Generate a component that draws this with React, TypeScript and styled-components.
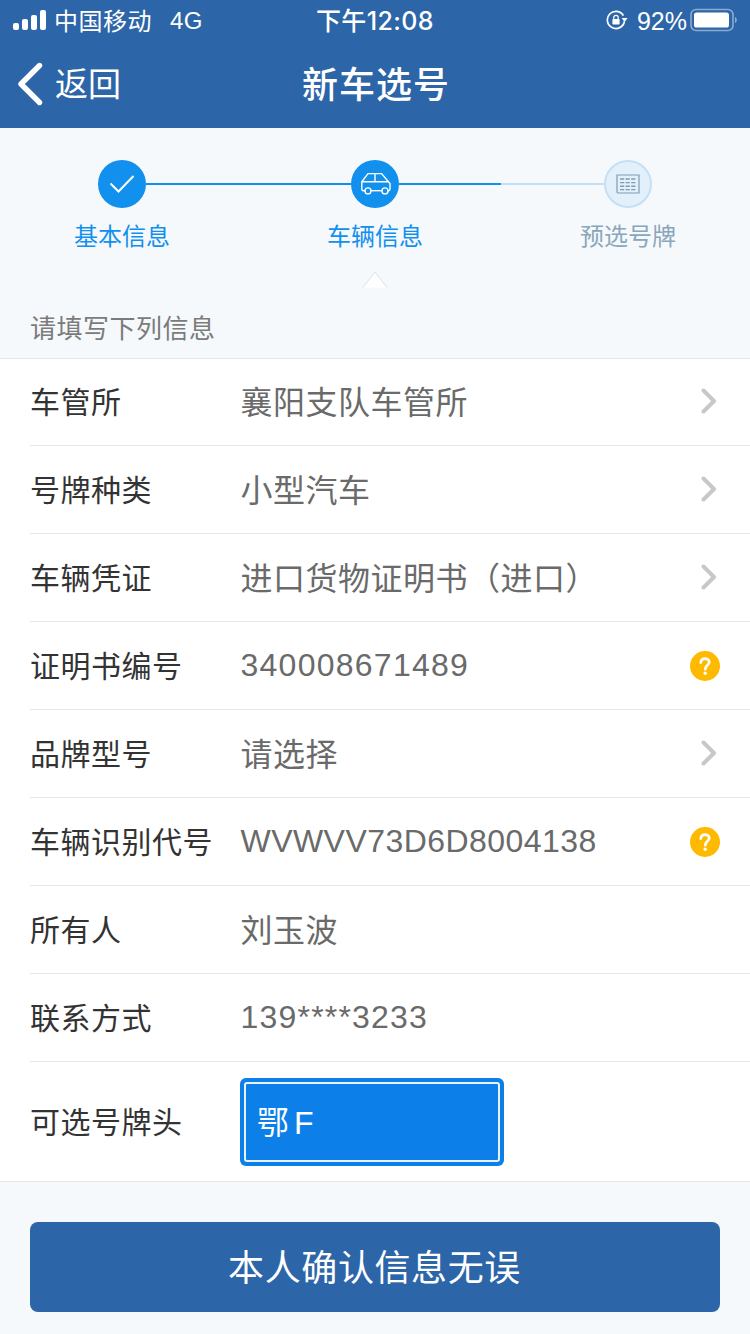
import React from 'react';
import styled, { createGlobalStyle } from 'styled-components';

const GlobalStyle = createGlobalStyle`
  html, body {
    margin: 0;
    padding: 0;
    background: #f5f9fb;
  }
  * {
    box-sizing: border-box;
  }
`;

type RowData = {
  label: string;
  value: string;
  trailing?: 'chevron' | 'help';
  latinSpacing?: number;
};

const rows: RowData[] = [
  { label: '车管所', value: '襄阳支队车管所', trailing: 'chevron' },
  { label: '号牌种类', value: '小型汽车', trailing: 'chevron' },
  { label: '车辆凭证', value: '进口货物证明书（进口）', trailing: 'chevron' },
  { label: '证明书编号', value: '340008671489', trailing: 'help', latinSpacing: 1.25 },
  { label: '品牌型号', value: '请选择', trailing: 'chevron' },
  { label: '车辆识别代号', value: 'WVWVV73D6D8004138', trailing: 'help', latinSpacing: 0.45 },
  { label: '所有人', value: '刘玉波' },
  { label: '联系方式', value: '139****3233', latinSpacing: 1.2 },
];

const Chevron = () => (
  <ChevronSvg width="16" height="26" viewBox="0 0 16 26" fill="none">
    <path d="M2.5 2.5 L13 13 L2.5 23.5" stroke="#c8c8c8" strokeWidth="4" strokeLinecap="round" strokeLinejoin="round" />
  </ChevronSvg>
);

const HelpIcon = () => (
  <svg width="30" height="30" viewBox="0 0 30 30">
    <circle cx="15" cy="15" r="15" fill="#ffb900" />
    <path d="M10.8 11.6 C10.8 9 12.8 7.6 15 7.6 C17.4 7.6 19.2 9.1 19.2 11.3 C19.2 14.2 15.3 14.6 15.3 18.2" fill="none" stroke="#fff" strokeWidth="2.7" strokeLinecap="round" />
    <circle cx="15.2" cy="22.2" r="1.7" fill="#fff" />
  </svg>
);

const App = () => {
  return (
    <Page>
      <GlobalStyle />
      <Header>
        <StatusBar>
          <StatusLeft>
            <svg width="34" height="22" viewBox="0 0 34 22">
              <rect x="0" y="14" width="6" height="7" rx="2" fill="#fff" />
              <rect x="9" y="10" width="6" height="11" rx="2" fill="#fff" />
              <rect x="18" y="6" width="6" height="15" rx="2" fill="#fff" />
              <rect x="27" y="1" width="6" height="20" rx="2" fill="#fff" />
            </svg>
            <Carrier>中国移动</Carrier>
            <Network>4G</Network>
          </StatusLeft>
          <StatusTime>下午12:08</StatusTime>
          <StatusRight>
            <svg width="22" height="20" viewBox="0 0 22 20" fill="none">
              <path d="M17.4 5.6 A8.6 8.6 0 1 0 18.4 11.5" stroke="#fff" strokeWidth="1.7" />
              <path d="M15.6 8 L21.6 8 L18.6 12 Z" fill="#fff" />
              <rect x="6.4" y="9" width="7.2" height="5.6" rx="0.8" fill="#fff" />
              <path d="M7.8 9 V7.6 A2.2 2.2 0 0 1 12.2 7.6 V9" stroke="#fff" strokeWidth="1.2" />
            </svg>
            <Battery>92%</Battery>
            <svg width="47" height="24" viewBox="0 0 47 24" fill="none">
              <rect x="1" y="1.5" width="42" height="21" rx="5" stroke="#fff" strokeOpacity="0.45" strokeWidth="1.6" />
              <rect x="4" y="4.5" width="35" height="15" rx="2.6" fill="#fff" />
              <path d="M45 9 C46.2 9.5 46.8 10.6 46.8 12 C46.8 13.4 46.2 14.5 45 15 Z" fill="#fff" fillOpacity="0.45" />
            </svg>
          </StatusRight>
        </StatusBar>
        <NavBar>
          <BackButton>
            <svg width="26" height="44" viewBox="0 0 26 44" fill="none">
              <path d="M22.5 3.5 L4 22 L22.5 40.5" stroke="#fff" strokeWidth="5.4" strokeLinecap="round" strokeLinejoin="round" />
            </svg>
            <BackLabel>返回</BackLabel>
          </BackButton>
          <NavTitle>新车选号</NavTitle>
        </NavBar>
      </Header>

      <Stepper>
        <StepTrack>
          <StepCircle>
            <svg width="26" height="20" viewBox="0 0 26 20" fill="none">
              <path d="M1.5 9.5 L9.5 17.5 L24.5 2" stroke="#fff" strokeWidth="2" />
            </svg>
          </StepCircle>
          <StepLine $done={100} />
          <StepCircle>
            <svg width="32" height="24" viewBox="0 0 32 24" fill="none" stroke="#fff" strokeWidth="1.4">
              <path d="M6 18.7 H4.2 C3.3 18.7 2.8 18.2 2.8 17.3 V9.8 L9 1.6 H22.6 L29 9.2 L31 11.6 V17 C31 18.1 30.5 18.7 29.6 18.7 H29" />
              <path d="M12 18.7 H23" />
              <circle cx="9" cy="18.9" r="3" />
              <circle cx="26" cy="18.9" r="3" />
              <path d="M2.8 9.8 H29 M16 1.6 V9.8" />
            </svg>
          </StepCircle>
          <StepLine $done={50} />
          <StepCircle $pending>
            <svg width="24" height="20" viewBox="0 0 24 20" fill="none" stroke="#7f9cb3">
              <path d="M23 19 H2.6 C1.6 19 1 18.4 1 17.4 V1 H23 Z" strokeWidth="1.2" />
              <path d="M4 5 H20.5 M4 8.6 H20.5 M4 12.2 H20.5 M4 15.6 H20.5" strokeWidth="1.4" strokeDasharray="4.2 1.4" />
            </svg>
          </StepCircle>
        </StepTrack>
        <StepLabels>
          <StepLabel>基本信息</StepLabel>
          <StepLabel>车辆信息</StepLabel>
          <StepLabel $pending>预选号牌</StepLabel>
        </StepLabels>
        <Pointer>
          <svg width="26" height="17" viewBox="0 0 26 17">
            <path d="M1 16.5 L13 1 L25 16.5 Z" fill="#fff" />
            <path d="M1 16.5 L13 1 L25 16.5" fill="none" stroke="#d6e3ee" strokeWidth="1" />
          </svg>
        </Pointer>
        <SectionTitle>请填写下列信息</SectionTitle>
      </Stepper>

      <FormList>
        {rows.map((row) => (
          <Row key={row.label}>
            <RowLabel>{row.label}</RowLabel>
            <RowValue $latinSpacing={row.latinSpacing}>{row.value}</RowValue>
            <RowTrailing>
              {row.trailing === 'chevron' && <Chevron />}
              {row.trailing === 'help' && <HelpIcon />}
            </RowTrailing>
          </Row>
        ))}
        <PlateRow>
          <RowLabel>可选号牌头</RowLabel>
          <PlateSelect>
            <PlateInner>鄂F</PlateInner>
          </PlateSelect>
        </PlateRow>
      </FormList>

      <Footer>
        <ConfirmButton>本人确认信息无误</ConfirmButton>
      </Footer>
    </Page>
  );
};

const FONT = `"Liberation Sans", "Noto Sans CJK SC", sans-serif`;

const Page = styled.div`
  width: 750px;
  height: 1334px;
  overflow: hidden;
  display: flex;
  flex-direction: column;
  background: #f5f9fb;
  font-family: ${FONT};
`;

const Header = styled.header`
  height: 128px;
  background: #2c65a8;
  color: #fff;
`;

const StatusBar = styled.div`
  height: 40px;
  padding: 0 13px;
  display: grid;
  grid-template-columns: 1fr auto 1fr;
  align-items: center;
`;

const StatusLeft = styled.div`
  display: flex;
  align-items: center;
  gap: 7px;
`;

const Carrier = styled.span`
  font-size: 24px;
  letter-spacing: 0.5px;
  padding-bottom: 2px;
`;

const Network = styled.span`
  font-size: 24px;
  margin-left: 11px;
  padding-top: 2px;
  letter-spacing: 0.4px;
`;

const StatusTime = styled.span`
  font-family: Inter, "Noto Sans CJK SC", sans-serif;
  font-size: 25px;
  font-weight: 500;
  letter-spacing: 0.4px;
  padding-bottom: 2px;
`;

const StatusRight = styled.div`
  display: flex;
  align-items: center;
  justify-content: flex-end;
  gap: 3px;
`;

const Battery = styled.span`
  font-size: 25px;
  margin-left: 6px;
  padding-top: 2px;
`;

const NavBar = styled.nav`
  height: 88px;
  position: relative;
  display: flex;
  align-items: center;
  justify-content: center;
`;

const BackButton = styled.div`
  position: absolute;
  left: 17px;
  top: 0;
  height: 88px;
  display: flex;
  align-items: center;
  gap: 12px;
`;

const BackLabel = styled.span`
  font-size: 33px;
  padding-bottom: 4px;
`;

const NavTitle = styled.h1`
  margin: 0;
  padding: 0 0 4px 2px;
  font-size: 36px;
  font-weight: 500;
  letter-spacing: 1px;
`;

const Stepper = styled.section`
  height: 230px;
  padding-top: 32px;
  display: flex;
  flex-direction: column;
`;

const StepTrack = styled.div`
  display: flex;
  align-items: center;
  padding: 0 98px;
`;

const StepCircle = styled.div<{ $pending?: boolean }>`
  width: 48px;
  height: 48px;
  flex: none;
  border-radius: 50%;
  display: flex;
  align-items: center;
  justify-content: center;
  background: ${({ $pending }) => ($pending ? '#e2f0fb' : '#1190ee')};
  border: ${({ $pending }) => ($pending ? '2px solid #c5e0f4' : 'none')};
`;

const StepLine = styled.div<{ $done: number }>`
  flex: 1;
  height: 2px;
  background: ${({ $done }) => `linear-gradient(to right, #1190ee ${$done}%, #c5e0f4 ${$done}%)`};
`;

const StepLabels = styled.div`
  display: flex;
  justify-content: space-between;
  padding: 0 74px;
  margin-top: 12px;
`;

const StepLabel = styled.span<{ $pending?: boolean }>`
  font-size: 24px;
  line-height: 34px;
  color: ${({ $pending }) => ($pending ? '#8aa6bc' : '#1190ee')};
`;

const Pointer = styled.div`
  display: flex;
  justify-content: center;
  margin-top: 17px;
  height: 16px;

  svg {
    display: block;
  }
`;

const SectionTitle = styled.div`
  padding-left: 30px;
  margin-top: 25px;
  font-size: 26px;
  line-height: 34px;
  letter-spacing: 0.5px;
  color: #7b7b7b;
`;

const FormList = styled.div`
  background: #fff;
  border-top: 1px solid #e6e6e6;
  border-bottom: 1px solid #e6e6e6;
`;

const Row = styled.div`
  height: 88px;
  margin-left: 30px;
  padding-right: 30px;
  display: flex;
  align-items: center;
  border-bottom: 1px solid #e6e6e6;

  &:first-child {
    height: 87px;
  }
`;

const RowLabel = styled.span`
  width: 210px;
  flex: none;
  padding-bottom: 4px;
  font-size: 30px;
  letter-spacing: 0.5px;
  color: #333;
`;

// CJK glyphs sit lower in the line box than latin ones, so only those get lifted
const RowValue = styled.span<{ $latinSpacing?: number }>`
  flex: 1;
  padding-left: 0.5px;
  padding-bottom: ${({ $latinSpacing }) => ($latinSpacing ? '0' : '4px')};
  font-size: 32px;
  color: #6a6a6a;
  letter-spacing: ${({ $latinSpacing }) => $latinSpacing ?? 0.5}px;
  white-space: nowrap;
`;

const RowTrailing = styled.div`
  width: 30px;
  flex: none;
  display: flex;
  justify-content: center;
  align-items: center;

  svg {
    display: block;
  }
`;

const ChevronSvg = styled.svg`
  margin-left: 8px;
  margin-bottom: 2px;
`;

const PlateRow = styled.div`
  height: 119px;
  margin-left: 30px;
  display: flex;
  align-items: center;
`;

const PlateSelect = styled.div`
  width: 264px;
  height: 88px;
  padding: 4px;
  border-radius: 6px;
  background: #0c80e8;
`;

const PlateInner = styled.div`
  height: 100%;
  padding: 0 0 4px 11px;
  display: flex;
  align-items: center;
  border: 2px solid #e6f2fc;
  border-radius: 3px;
  font-size: 32px;
  letter-spacing: 5px;
  color: #fff;
`;

const Footer = styled.footer`
  flex: 1;
  padding: 40px 30px 0;
`;

const ConfirmButton = styled.div`
  height: 90px;
  padding: 0 1px 4px 0;
  border-radius: 8px;
  background: #2c65a8;
  color: #fff;
  font-size: 36px;
  letter-spacing: 0.6px;
  display: flex;
  align-items: center;
  justify-content: center;
`;

export default App;
